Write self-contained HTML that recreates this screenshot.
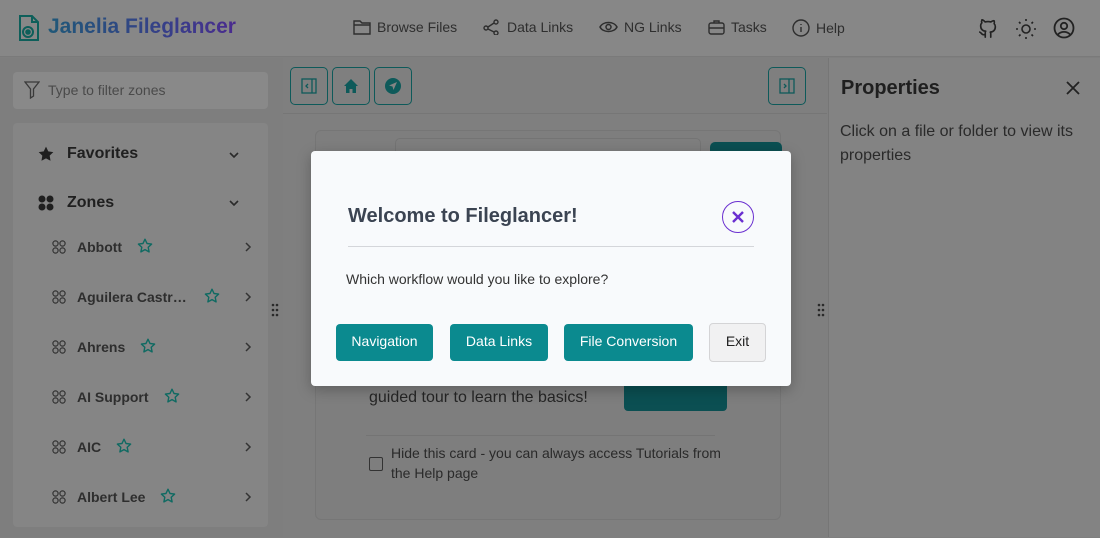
<!DOCTYPE html>
<html><head><meta charset="utf-8"><style>
*{box-sizing:border-box;margin:0;padding:0}
body{width:1100px;height:537px;overflow:hidden;font-family:"Liberation Sans",Arial,sans-serif;background:#7f7f7f;position:relative;color:#262626}
.abs{position:absolute}
.hdr{left:0;top:0;width:1100px;height:57px;background:#878787;border-bottom:1px solid #7a7a7a}
.nav{top:19px;font-size:14px;color:#2e2e2e;display:flex;align-items:center;gap:6px}
.side{left:0;top:58px;width:283px;height:479px;background:#7e7e7e}
.filter{left:13px;top:72px;width:255px;height:37px;background:#898989;border-radius:4px;font-size:14px;color:#4a4a4a;padding:10px 0 0 35px}
.card{left:13px;top:123px;width:255px;height:404px;background:#858585;border-radius:4px}
.sec{font-size:16px;font-weight:bold;color:#1f1f1f}
.zone{font-size:14px;font-weight:bold;color:#2e2e2e;white-space:nowrap}
.tb{top:67px;width:38px;height:38px;border:1.5px solid #0e5a5a;border-radius:5px;display:flex;align-items:center;justify-content:center}
.props{left:828px;top:58px;width:272px;height:479px;background:#838383;border-left:1px solid #767676}
.modal{left:311px;top:151px;width:480px;height:235px;background:#f8fafc;border-radius:4px;box-shadow:0 4px 14px rgba(0,0,0,.25)}
.btn{top:324px;height:37px;background:#0b8a8f;color:#fff;border-radius:4px;font-size:14px;display:flex;align-items:center;justify-content:center;padding-bottom:3px}
</style></head><body>
<div class="abs hdr"></div>
<svg class="abs" style="left:18px;top:14px" width="22" height="28" viewBox="0 0 22 28" fill="none" stroke="#0e5f5a" stroke-width="2"><path d="M2 2h12l6 6v18H2z"/><path d="M14 2v6h6"/><circle cx="10" cy="18" r="5"/><circle cx="10" cy="18" r="1.8" fill="#0e5f5a"/></svg>
<div class="abs" style="left:48px;top:15px;font-size:21px;font-weight:bold;background:linear-gradient(90deg,#1f5878,#3a3c8a 70%,#4a2a8e);-webkit-background-clip:text;background-clip:text;color:transparent">Janelia Fileglancer</div>
<div class="abs nav" style="left:353px"><svg width="18" height="16" viewBox="0 0 18 16" fill="none" stroke="#2e2e2e" stroke-width="1.4"><path d="M1 2h6l2 2h8v11H1z M1 6h16"/></svg>Browse Files</div>
<div class="abs nav" style="left:483px"><svg width="18" height="16" viewBox="0 0 18 16" fill="none" stroke="#2e2e2e" stroke-width="1.4"><circle cx="3" cy="9" r="2"/><circle cx="13" cy="3" r="2"/><circle cx="13" cy="14" r="2"/><path d="M5 8l6-4M5 10l6 3"/></svg>Data Links</div>
<div class="abs nav" style="left:599px"><svg width="19" height="14" viewBox="0 0 19 14" fill="none" stroke="#2e2e2e" stroke-width="1.5"><path d="M1 7c3-6 14-6 17 0c-3 6-14 6-17 0z"/><circle cx="9.5" cy="7" r="2.5"/></svg>NG Links</div>
<div class="abs nav" style="left:708px"><svg width="17" height="16" viewBox="0 0 17 16" fill="none" stroke="#2e2e2e" stroke-width="1.4"><rect x="1" y="4" width="15" height="11" rx="2"/><path d="M6 4V2h5v2M1 9h15"/></svg>Tasks</div>
<div class="abs nav" style="left:792px"><svg width="18" height="18" viewBox="0 0 18 18" fill="none" stroke="#2e2e2e" stroke-width="1.4"><circle cx="9" cy="9" r="8"/><path d="M9 8v5M9 5v1"/></svg>Help</div>
<svg class="abs" style="left:977px;top:17px" width="22" height="22" viewBox="0 0 24 24" fill="none" stroke="#222" stroke-width="1.8" stroke-linecap="round" stroke-linejoin="round"><path d="M9 19c-4 1.5-4-2-6-2.5M15 22v-3.5c0-1 .1-1.4-.5-2c2.8-.3 5.5-1.4 5.5-6a4.6 4.6 0 0 0-1.3-3.2a4.2 4.2 0 0 0-.1-3.2s-1.1-.3-3.5 1.3a12 12 0 0 0-6.2 0C6.5 2.8 5.4 3.1 5.4 3.1a4.2 4.2 0 0 0-.1 3.2A4.6 4.6 0 0 0 4 9.5c0 4.6 2.7 5.7 5.5 6c-.6.6-.6 1.2-.5 2V22"/></svg>
<svg class="abs" style="left:1015px;top:18px" width="22" height="22" viewBox="0 0 22 22" fill="none" stroke="#222" stroke-width="1.6"><circle cx="11" cy="11" r="4"/><path d="M11 1v2M11 19v2M1 11h2M19 11h2M4 4l1.5 1.5M16.5 16.5L18 18M4 18l1.5-1.5M16.5 5.5L18 4"/></svg>
<svg class="abs" style="left:1053px;top:17px" width="22" height="22" viewBox="0 0 22 22" fill="none" stroke="#222" stroke-width="1.8"><circle cx="11" cy="11" r="9.5"/><circle cx="11" cy="9" r="3.2"/><path d="M5 17.5c3-3.5 9-3.5 12 0"/></svg>

<div class="abs side"></div>
<div class="abs filter">Type to filter zones</div>
<svg class="abs" style="left:24px;top:81px" width="16" height="18" viewBox="0 0 16 18" fill="none" stroke="#3a3a3a" stroke-width="1.3"><path d="M1 1h14l-5.5 7v7l-3 2V8z"/></svg>
<div class="abs card"></div>
<svg class="abs" style="left:38px;top:146px" width="16" height="16" viewBox="0 0 24 24" fill="#1f1f1f"><path d="M12 1l3.4 7l7.6 1.1l-5.5 5.4l1.3 7.6L12 18.5l-6.8 3.6l1.3-7.6L1 9.1L8.6 8z"/></svg>
<div class="abs sec" style="left:67px;top:145px">Favorites</div>
<div class="abs sec" style="left:67px;top:194px">Zones</div>
<svg class="abs" style="left:38px;top:195px" width="16" height="16"><circle cx="4" cy="4" r="3.5" fill="#1f1f1f"/><circle cx="12" cy="4" r="3.5" fill="#1f1f1f"/><circle cx="4" cy="12" r="3.5" fill="#1f1f1f"/><circle cx="12" cy="12" r="3.5" fill="#1f1f1f"/></svg>
<svg class="abs" style="left:228px;top:149px" width="12" height="60" fill="none" stroke="#2a2a2a" stroke-width="1.6"><path d="M2 4l4 4l4-4M2 52l4 4l4-4"/></svg>
<svg width="0" height="0" style="position:absolute"><defs><path id="st" d="M8 1.2l2 4.3l4.6.6l-3.4 3.2l.9 4.6L8 11.6l-4.1 2.3l.9-4.6L1.4 6.1L6 5.5z" fill="none" stroke="#0f6a62" stroke-width="1.4" stroke-linejoin="round"/></defs></svg>
<div class="abs" style="left:52px;top:238px">
<div style="position:relative;height:300px">
<svg class="abs" style="left:0;top:2px" width="14" height="264" fill="none" stroke="#333" stroke-width="1.2"><g id="g"><circle cx="3.5" cy="3.5" r="2.6"/><circle cx="10.5" cy="3.5" r="2.6"/><circle cx="3.5" cy="10.5" r="2.6"/><circle cx="10.5" cy="10.5" r="2.6"/></g><use href="#g" y="50"/><use href="#g" y="100"/><use href="#g" y="150"/><use href="#g" y="200"/><use href="#g" y="250"/></svg>
<div class="abs zone" style="left:25px;top:1px">Abbott</div>
<div class="abs zone" style="left:25px;top:51px">Aguilera Castr…</div>
<div class="abs zone" style="left:25px;top:101px">Ahrens</div>
<div class="abs zone" style="left:25px;top:151px">AI Support</div>
<div class="abs zone" style="left:25px;top:201px">AIC</div>
<div class="abs zone" style="left:25px;top:251px">Albert Lee</div>
<svg class="abs" style="left:0;top:0" width="200" height="270"><use href="#st" x="85" y="0"/><use href="#st" x="152" y="50"/><use href="#st" x="88" y="100"/><use href="#st" x="112" y="150"/><use href="#st" x="64" y="200"/><use href="#st" x="108" y="250"/></svg>
<svg class="abs" style="left:192px;top:4px" width="8" height="264" fill="none" stroke="#333" stroke-width="1.5"><path d="M2 1l4 4l-4 4M2 51l4 4l-4 4M2 101l4 4l-4 4M2 151l4 4l-4 4M2 201l4 4l-4 4M2 251l4 4l-4 4"/></svg>
</div></div>
<svg class="abs" style="left:271px;top:303px" width="8" height="14" fill="#2a2a2a"><circle cx="2" cy="2" r="1.3"/><circle cx="6" cy="2" r="1.3"/><circle cx="2" cy="7" r="1.3"/><circle cx="6" cy="7" r="1.3"/><circle cx="2" cy="12" r="1.3"/><circle cx="6" cy="12" r="1.3"/></svg>
<svg class="abs" style="left:817px;top:303px" width="8" height="14" fill="#2a2a2a"><circle cx="2" cy="2" r="1.3"/><circle cx="6" cy="2" r="1.3"/><circle cx="2" cy="7" r="1.3"/><circle cx="6" cy="7" r="1.3"/><circle cx="2" cy="12" r="1.3"/><circle cx="6" cy="12" r="1.3"/></svg>

<div class="abs" style="left:283px;top:113px;width:544px;height:1px;background:#767676"></div>
<div class="abs tb" style="left:290px"><svg width="16" height="16" fill="none" stroke="#0e5a5a" stroke-width="1.3"><rect x="1" y="1" width="14" height="14"/><path d="M11 1v14M7 6l-2 2l2 2"/></svg></div>
<div class="abs tb" style="left:332px"><svg width="16" height="16" fill="#0e5a5a"><path d="M8 1l7 7h-2v7h-3.5v-4h-3v4H3V8H1z"/></svg></div>
<div class="abs tb" style="left:374px"><svg width="18" height="18"><circle cx="9" cy="9" r="8" fill="#0e5a5a"/><path d="M13 5l-8 3.5l3.5 1l1 3.5z" fill="#848484"/></svg></div>
<div class="abs tb" style="left:768px"><svg width="16" height="16" fill="none" stroke="#0e5a5a" stroke-width="1.3"><rect x="1" y="1" width="14" height="14"/><path d="M10 1v14M5 6l2 2l-2 2"/></svg></div>

<div class="abs" style="left:315px;top:130px;width:466px;height:390px;background:#7e7e7e;border:1px solid #767676;border-radius:6px"></div>
<div class="abs" style="left:395px;top:138px;width:306px;height:30px;border:1px solid #747474;border-radius:5px"></div>
<div class="abs" style="left:710px;top:142px;width:72px;height:20px;background:#0b4f52;border-radius:5px"></div>
<div class="abs" style="left:369px;top:389px;font-size:16px;color:#252525">guided tour to learn the basics!</div>
<div class="abs" style="left:624px;top:380px;width:103px;height:31px;background:#0b4f52;border-radius:4px"></div>
<div class="abs" style="left:366px;top:435px;width:349px;height:1px;background:#747474"></div>
<div class="abs" style="left:369px;top:457px;width:14px;height:14px;border:1.3px solid #333;border-radius:2px"></div>
<div class="abs" style="left:391px;top:443px;width:340px;font-size:14px;line-height:20px;color:#2a2a2a">Hide this card - you can always access Tutorials from the Help page</div>

<div class="abs props"></div>
<div class="abs" style="left:841px;top:77px;font-size:20px;font-weight:bold;color:#1f1f1f">Properties</div>
<svg class="abs" style="left:1066px;top:81px" width="14" height="14" stroke="#222" stroke-width="1.8"><path d="M1 1l12 12M13 1L1 13"/></svg>
<div class="abs" style="left:840px;top:120px;width:250px;font-size:16px;line-height:24px;color:#2a2a2a">Click on a file or folder to view its properties</div>

<div class="abs modal">
<div class="abs" style="left:37px;top:54px;font-size:20px;font-weight:bold;color:#3b4452">Welcome to Fileglancer!</div>
<div class="abs" style="left:411px;top:50px;width:32px;height:32px;border:1.3px solid #6a2fd0;border-radius:50%;display:flex;align-items:center;justify-content:center"><svg width="12" height="12" stroke="#6a2fd0" stroke-width="2.4"><path d="M1 1l10 10M11 1L1 11"/></svg></div>
<div class="abs" style="left:37px;top:95px;width:406px;height:1px;background:#d4d6da"></div>
<div class="abs" style="left:35px;top:120px;font-size:14px;color:#333">Which workflow would you like to explore?</div>
</div>
<div class="abs btn" style="left:336px;width:97px">Navigation</div>
<div class="abs btn" style="left:450px;width:98px">Data Links</div>
<div class="abs btn" style="left:564px;width:129px">File Conversion</div>
<div class="abs" style="left:709px;top:323px;width:57px;height:39px;background:#f1f1f2;border:1px solid #d4d4d6;border-radius:4px;font-size:14px;color:#222;display:flex;align-items:center;justify-content:center;padding-bottom:3px">Exit</div>
</body></html>
